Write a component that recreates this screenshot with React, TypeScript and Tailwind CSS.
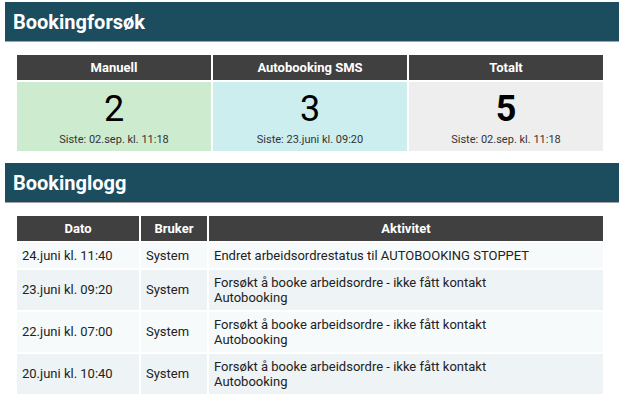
const summary = [
  { label: "Manuell", value: "2", last: "Siste: 02.sep. kl. 11:18", bg: "bg-[#cdeccf]", bold: false },
  { label: "Autobooking SMS", value: "3", last: "Siste: 23.juni kl. 09:20", bg: "bg-[#cdeeef]", bold: false },
  { label: "Totalt", value: "5", last: "Siste: 02.sep. kl. 11:18", bg: "bg-[#eeeeee]", bold: true },
];

const log = [
  { date: "24.juni kl. 11:40", user: "System", text: ["Endret arbeidsordrestatus til AUTOBOOKING STOPPET"] },
  { date: "23.juni kl. 09:20", user: "System", text: ["Forsøkt å booke arbeidsordre - ikke fått kontakt", "Autobooking"] },
  { date: "22.juni kl. 07:00", user: "System", text: ["Forsøkt å booke arbeidsordre - ikke fått kontakt", "Autobooking"] },
  { date: "20.juni kl. 10:40", user: "System", text: ["Forsøkt å booke arbeidsordre - ikke fått kontakt", "Autobooking"] },
];

function SectionHeader({ title }: { title: string }) {
  return (
    <div className="mx-[5px] flex h-[40px] items-center border-b border-[#a3a3a3] bg-[#1b4d5f] pl-2">
      <h2 className="text-[20px] font-bold text-white">{title}</h2>
    </div>
  );
}

export default function App() {
  return (
    <div className="w-[624px] h-[400px] overflow-hidden bg-white pt-[2px] font-['Roboto',sans-serif] text-[#222]">
      <SectionHeader title="Bookingforsøk" />

      <div className="mx-[17px] mt-[13px] grid w-[586px] grid-cols-3 gap-x-[2px] gap-y-[2px]">
        {summary.map((s) => (
          <div
            key={s.label}
            className="flex h-[25px] items-center justify-center bg-[#404040] text-[13px] font-bold text-white"
          >
            {s.label}
          </div>
        ))}
        {summary.map((s) => (
          <div key={s.label + "-v"} className={`flex h-[69px] flex-col items-center ${s.bg}`}>
            <div className={`mt-[6px] text-[36px] leading-[42px] text-black ${s.bold ? "font-bold" : ""}`}>
              {s.value}
            </div>
            <div className="mt-[3px] text-[11px] leading-[13px] text-[#333]">{s.last}</div>
          </div>
        ))}
      </div>

      <div className="mt-[12px]">
        <SectionHeader title="Bookinglogg" />
      </div>

      <div className="mx-[17px] mt-[13px] grid w-[586px] grid-cols-[122px_66px_1fr] gap-[2px] text-[13px]">
        <div className="flex h-[25px] items-center justify-center bg-[#404040] font-bold text-white">Dato</div>
        <div className="flex h-[25px] items-center justify-center bg-[#404040] font-bold text-white">Bruker</div>
        <div className="flex h-[25px] items-center justify-center bg-[#404040] font-bold text-white">Aktivitet</div>
        {log.map((r, i) => {
          const bg = i % 2 === 0 ? "bg-[#f6fafb]" : "bg-[#eef3f5]";
          const h = r.text.length > 1 ? "h-[40px]" : "h-[25px]";
          return [
            <div key={i + "d"} className={`flex items-center px-[5px] ${h} ${bg}`}>{r.date}</div>,
            <div key={i + "u"} className={`flex items-center px-[5px] ${h} ${bg}`}>{r.user}</div>,
            <div key={i + "a"} className={`flex flex-col justify-center px-[5px] leading-[15px] ${h} ${bg}`}>
              {r.text.map((t) => (
                <span key={t}>{t}</span>
              ))}
            </div>,
          ];
        })}
      </div>
    </div>
  );
}
